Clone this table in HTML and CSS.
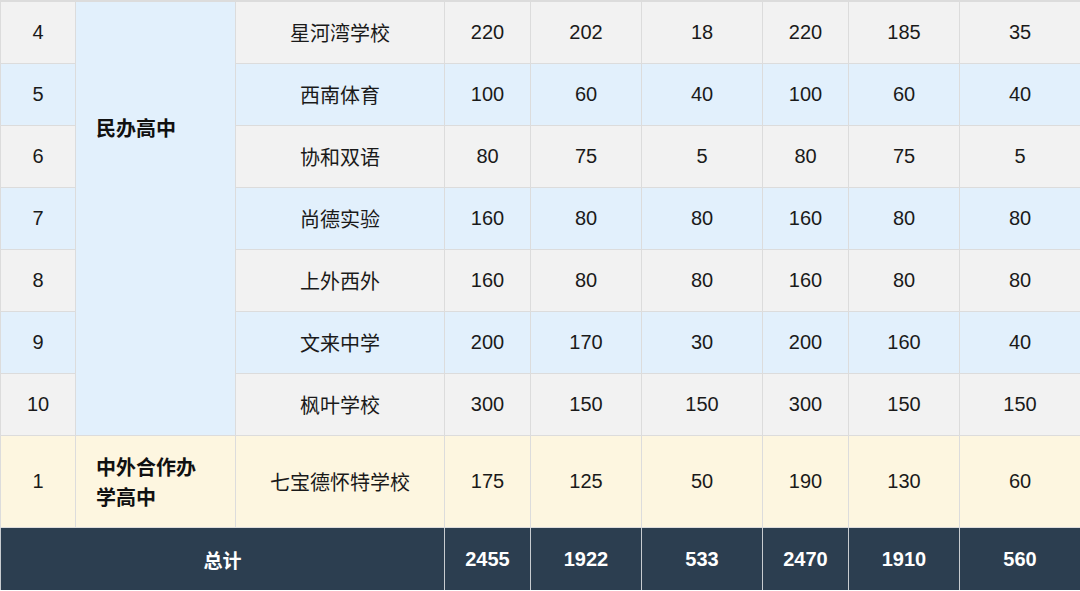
FILE: index.html
```html
<!DOCTYPE html>
<html lang="zh">
<head>
<meta charset="utf-8">
<link rel="stylesheet" href="styles.css">
</head>
<body>
<table class="grid">
  <colgroup>
    <col class="c-no"><col class="c-cat"><col class="c-name">
    <col class="c-a"><col class="c-b"><col class="c-c">
    <col class="c-a"><col class="c-b"><col class="c-c2">
  </colgroup>
  <tbody>
    <tr class="gray"><td>4</td><td class="cat blue top" rowspan="7"><span>民办高中</span></td><td>星河湾学校</td><td>220</td><td>202</td><td>18</td><td>220</td><td>185</td><td>35</td></tr>
    <tr class="blue"><td>5</td><td>西南体育</td><td>100</td><td>60</td><td>40</td><td>100</td><td>60</td><td>40</td></tr>
    <tr class="gray"><td>6</td><td>协和双语</td><td>80</td><td>75</td><td>5</td><td>80</td><td>75</td><td>5</td></tr>
    <tr class="blue"><td>7</td><td>尚德实验</td><td>160</td><td>80</td><td>80</td><td>160</td><td>80</td><td>80</td></tr>
    <tr class="gray"><td>8</td><td>上外西外</td><td>160</td><td>80</td><td>80</td><td>160</td><td>80</td><td>80</td></tr>
    <tr class="blue"><td>9</td><td>文来中学</td><td>200</td><td>170</td><td>30</td><td>200</td><td>160</td><td>40</td></tr>
    <tr class="gray"><td>10</td><td>枫叶学校</td><td>300</td><td>150</td><td>150</td><td>300</td><td>150</td><td>150</td></tr>
    <tr class="yellow tall"><td>1</td><td class="cat"><span>中外合作办学高中</span></td><td>七宝德怀特学校</td><td>175</td><td>125</td><td>50</td><td>190</td><td>130</td><td>60</td></tr>
    <tr class="total"><td colspan="3">总计</td><td>2455</td><td>1922</td><td>533</td><td>2470</td><td>1910</td><td>560</td></tr>
  </tbody>
</table>
</body>
</html>
```
FILE: styles.css
```css
html, body {
  margin: 0;
  padding: 0;
  background: #ffffff;
}
.grid {
  width: 1080px;
  border-collapse: collapse;
  table-layout: fixed;
  font-family: "Liberation Sans", Arial, "Noto Sans CJK SC", sans-serif;
  font-size: 20px;
  color: #1a1a1a;
}
.c-no { width: 75px; }
.c-cat { width: 160px; }
.c-name { width: 209px; }
.c-a { width: 86px; }
.c-b { width: 111px; }
.c-c { width: 121px; }
.c-c2 { width: 121px; }
.grid td {
  border: 1px solid #dcdcdc;
  text-align: center;
  vertical-align: middle;
  padding: 0;
  height: 61px;
}
.grid tr:first-child td { border-top: 2px solid #dcdcdc; }
.gray td { background: #f2f2f2; }
.blue td, td.blue { background: #e2f0fc; }
.yellow td { background: #fdf6e0; }
.tall td { height: 91px; }
.grid td.cat {
  background: #e2f0fc;
  text-align: left;
  padding: 0 20px;
  font-weight: bold;
  font-family: "Noto Sans CJK SC", sans-serif;
  font-size: 20px;
  color: #111;
}
.grid td.cat.top {
  vertical-align: top;
  padding-top: 111px;
}
.yellow td.cat { background: #fdf6e0; }
.cat span {
  display: block;
  max-width: 100px;
  line-height: 30px;
}
.total td {
  background: #2c3e50;
  color: #ffffff;
  font-weight: bold;
  border: 1px solid #c8ccd0;
  border-bottom: none;
  height: 62px;
}
.total td:first-child { font-family: "Noto Sans CJK SC", sans-serif; font-size: 19px; }
```
